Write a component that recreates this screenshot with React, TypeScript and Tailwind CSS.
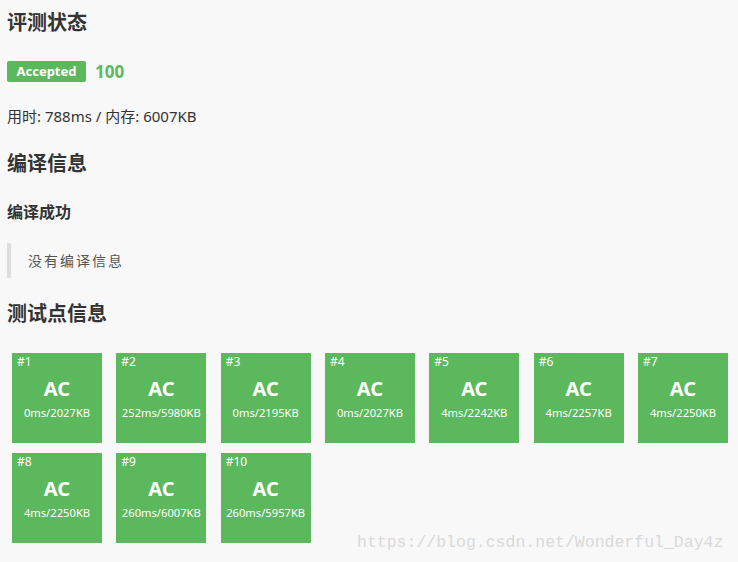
const cases = [
  { id: 1, info: '0ms/2027KB' },
  { id: 2, info: '252ms/5980KB' },
  { id: 3, info: '0ms/2195KB' },
  { id: 4, info: '0ms/2027KB' },
  { id: 5, info: '4ms/2242KB' },
  { id: 6, info: '4ms/2257KB' },
  { id: 7, info: '4ms/2250KB' },
  { id: 8, info: '4ms/2250KB' },
  { id: 9, info: '260ms/6007KB' },
  { id: 10, info: '260ms/5957KB' },
];

export default function App() {
  return (
    <div
      className="relative w-[738px] h-[562px] overflow-hidden bg-[#f8f8f8] text-[#333] pl-[7px]"
      style={{ fontFamily: '"Noto Sans", "Noto Sans CJK SC", sans-serif' }}
    >
      {/* 评测状态 */}
      <h2 className="mt-[9px] text-[20px] leading-[28px] font-bold">评测状态</h2>
      <div className="mt-[24px] flex items-center gap-[9px]">
        <span className="inline-flex items-center justify-center w-[79px] h-[21px] rounded-[2px] bg-[#5cb85c] text-white text-[13px] font-bold">
          Accepted
        </span>
        <span className="text-[#5cb85c] text-[17px] font-bold leading-[21px]">100</span>
      </div>
      <p className="mt-[24px] text-[15px] leading-[20px]">用时: 788ms / 内存: 6007KB</p>

      {/* 编译信息 */}
      <h2 className="mt-[24px] text-[20px] leading-[28px] font-bold">编译信息</h2>
      <h3 className="mt-[22px] text-[16px] leading-[24px] font-bold">编译成功</h3>
      <blockquote className="mt-[19px] h-[35px] border-l-4 border-[#ddd] pl-[17px] flex items-center text-[14px] text-[#555] tracking-[2px]">
        没有编译信息
      </blockquote>

      {/* 测试点信息 */}
      <h2 className="mt-[22px] text-[20px] leading-[28px] font-bold">测试点信息</h2>
      <div className="mt-[25px] ml-[5px] flex flex-wrap gap-x-[14.33px] gap-y-[10px] w-[720px]">
        {cases.map((c) => (
          <div key={c.id} className="w-[90px] h-[90px] bg-[#5cb85c] text-white flex flex-col">
            <div className="px-[5px] pt-[2px] text-[12px] leading-[14px]">#{c.id}</div>
            <div className="mt-[8px] text-center text-[20px] leading-[24px] font-bold">AC</div>
            <div className="mt-[4px] text-center text-[11.2px] leading-[16px]">{c.info}</div>
          </div>
        ))}
      </div>

      <div
        className="absolute left-[357px] top-[532px] text-[16.5px] leading-[22px] text-[#d9d9d9] whitespace-nowrap"
        style={{ fontFamily: '"Liberation Mono", monospace' }}
      >
        https://blog.csdn.net/Wonderful_Day4z
      </div>
    </div>
  );
}
